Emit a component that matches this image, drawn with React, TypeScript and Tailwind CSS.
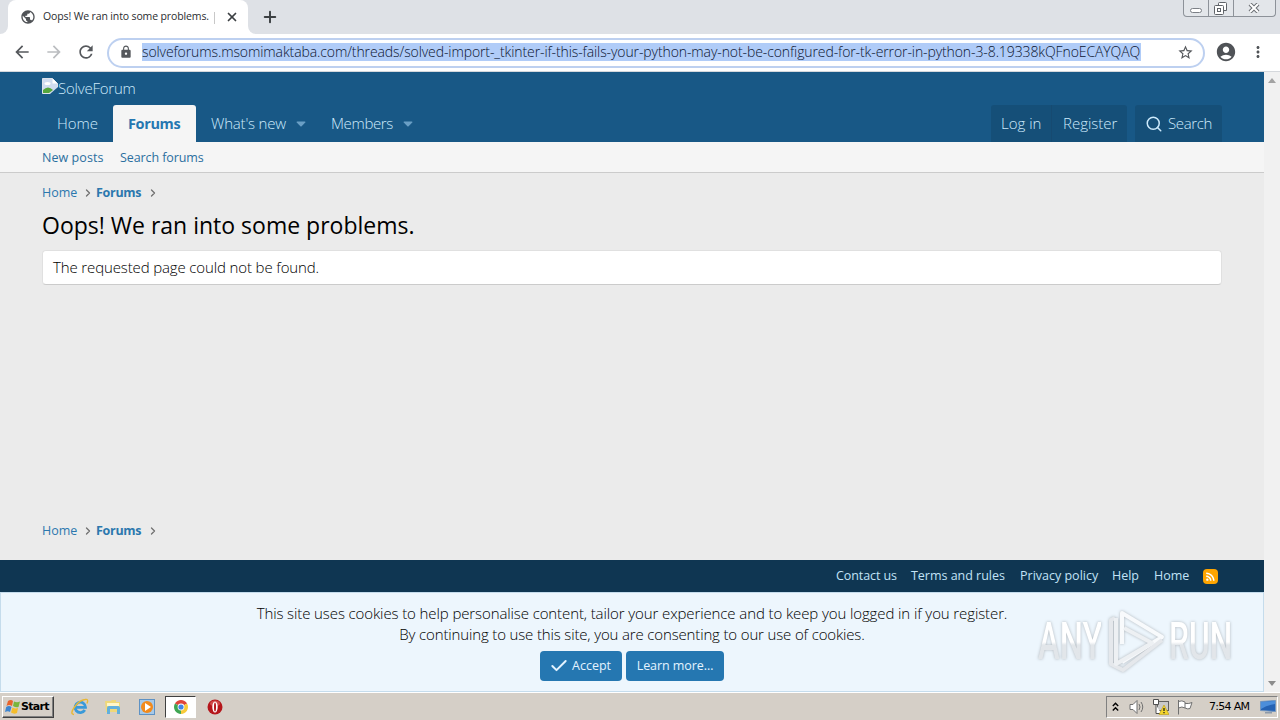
import React from 'react';
import { Check, ChevronRight, Plus, Search, X } from 'lucide-react';
import { MdAccountCircle, MdArrowBack, MdArrowForward, MdLock, MdMoreVert, MdPublic, MdRefresh, MdRssFeed, MdStarBorder } from 'react-icons/md';

interface NavItem {
  label: string;
  className: string;
}

const footerLinks: NavItem[] = [
  { label: 'Contact us', className: 'w-[75px] tracking-[-0.08px]' },
  { label: 'Terms and rules', className: 'w-[109px] tracking-[-0.02px]' },
  { label: 'Privacy policy', className: 'w-[92px]' },
  { label: 'Help', className: 'w-[42px] tracking-[-0.05px]' },
  { label: 'Home', className: 'w-[49px] tracking-[-0.05px]' },
];

const Caret: React.FC = () => (
  <svg className="h-[6px] w-[10px]" viewBox="0 0 10 6">
    <path d="M0.5 1.2Q0.5 0.5 1.2 0.5H8.8Q9.5 0.5 9.5 1.2L5.6 5.2Q5 5.8 4.4 5.2Z" fill="#6a9fc5" />
  </svg>
);

const TabStrip: React.FC = () => (
  <div className="flex h-[34px] items-start bg-[#dee1e6]">
    <div className="flex h-[34px] w-2 items-end bg-white">
      <div className="h-[34px] w-2 rounded-br-lg bg-[#dee1e6]" />
    </div>
    <div className="flex h-[34px] w-[240px] items-center rounded-t-lg bg-white pl-[12px]">
      <MdPublic className="h-4 w-4 text-[#505357]" />
      <span className="ml-[7px] w-[171px] whitespace-nowrap font-['Open_Sans'] text-[10.5px] tracking-[-0.13px] text-[#2b2d30]">
        Oops! We ran into some problems.
      </span>
      <span className="mt-0.5 h-3 w-px bg-[#c8c8c8]" />
      <X className="ml-[10px] h-[14px] w-[14px] shrink-0 text-[#3c4043]" strokeWidth={3} />
    </div>
    <div className="h-[34px] w-2 bg-white">
      <div className="h-[34px] w-2 rounded-bl-lg bg-[#dee1e6]" />
    </div>
    <Plus className="ml-[5px] mt-[8px] h-[18px] w-[18px] text-[#3c4043]" strokeWidth={2.6} />
    <div className="ml-auto mr-[4px] flex h-[17px] w-[93px] rounded-b-[4px] border border-t-0 border-[#8d9299] bg-[#e3e6ea]">
      <div className="w-[25px] border-r border-[#8d9299] pl-[6px] pt-[8px]">
        <div className="h-[5px] w-3 rounded-sm border border-[#7c8086] bg-white" />
      </div>
      <div className="w-[25px] border-r border-[#8d9299] pl-[5px] pt-[2px]">
        <svg className="h-[13px] w-[13px]" viewBox="0 0 13 13" fill="none" stroke="#5f6368">
          <path d="M4.500 3V1.500Q4.500 0.500 5.500 0.500H11.500Q12.500 0.500 12.500 1.500V8.500H9.500" fill="#fff" />
          <rect x="0.500" y="3.500" width="9" height="9" rx="1" fill="#fff" />
          <rect x="3.500" y="6.500" width="3" height="3" />
        </svg>
      </div>
      <div className="flex-1 pl-[14px] pt-[3px]">
        <svg className="h-[10px] w-3" viewBox="0 0 12 10" fill="none">
          <path d="M2 1L10 9M10 1L2 9" stroke="#6a6e73" strokeWidth="4" />
          <path d="M2 1L10 9M10 1L2 9" stroke="#fff" strokeWidth="2" />
        </svg>
      </div>
    </div>
  </div>
);

const Toolbar: React.FC = () => (
  <div className="flex h-[38px] items-center border-b border-[#d5d8dc] bg-white pb-px">
    <MdArrowBack className="ml-[12px] h-5 w-5 text-[#55585c]" />
    <MdArrowForward className="ml-[12px] h-5 w-5 text-[#bbbdc0]" />
    <MdRefresh className="ml-[12px] h-5 w-5 text-[#55585c]" />
    <div className="mt-px ml-[11px] flex h-[30px] w-[1098px] items-center rounded-full border-2 border-[#bdd0f0] bg-white pb-px">
      <MdLock className="ml-[10px] h-[14px] w-[14px] text-[#55585c]" />
      <span className="ml-[9px] flex h-[18px] w-[999px] items-center whitespace-nowrap bg-[#b0ccf8] pb-px font-['Open_Sans'] text-[14px] font-light tracking-[-0.1px] text-[#0c1530]">
        solveforums.msomimaktaba.com/threads/solved-import-_tkinter-if-this-fails-your-python-may-not-be-configured-for-tk-error-in-python-3-8.19338kQFnoECAYQAQ
      </span>
      <MdStarBorder className="ml-[36px] h-[17px] w-[17px] text-[#55585c]" />
    </div>
    <MdAccountCircle className="ml-[10px] h-[22px] w-[22px] text-[#505357]" />
    <MdMoreVert className="ml-[12px] h-[18px] w-[18px] text-[#505357]" />
  </div>
);

const SiteHeader: React.FC = () => (
  <header className="font-['Open_Sans']">
    <div className="flex h-[70px] flex-col bg-[#185886] px-[42px] text-[#cdeafc]">
      <div className="flex h-[33px] pt-[6px]">
        <svg className="h-4 w-4" viewBox="0 0 16 16">
          <path d="M0.500 0.500H10.500L15.500 5.500V11L9 15.500H0.500Z" fill="#d0dcf0" stroke="#dfe3ea" />
          <path d="M10.500 0.500V5.500H15.500Z" fill="#fff" />
          <ellipse cx="5.500" cy="5.500" rx="3" ry="1.500" fill="#fff" />
          <path d="M1 15V12Q6 7 11 12L7 15Z" fill="#55a63c" />
          <path d="M16 9V16H8Z" fill="#185886" />
        </svg>
        <span className="h-[21px] text-[15px] leading-[21px] font-light tracking-[-0.22px]">SolveForum</span>
      </div>
      <nav className="flex h-[37px] text-[15px] leading-[37px] font-light whitespace-nowrap">
        <a className="w-[71px] pl-[15px]">Home</a>
        <a className="w-[83px] rounded-t-[3px] bg-[#f5f5f5] pl-[15px] text-[14.5px] font-bold tracking-[-0.38px] text-[#2577b1]">Forums</a>
        <a className="w-[100px] pl-[15px] tracking-[-0.2px]">What's new</a>
        <span className="flex w-[20px] items-center"><Caret /></span>
        <a className="w-[87px] pl-[15px] tracking-[-0.35px]">Members</a>
        <span className="flex w-[20px] items-center"><Caret /></span>
        <div className="ml-auto flex">
          <a className="w-[61px] rounded-tl-[3px] border-r border-[#164a71] bg-[#154f78] pl-[10px]">Log in</a>
          <a className="w-[75px] rounded-tr-[3px] bg-[#154f78] pl-[11px]">Register</a>
          <a className="ml-2 flex w-[87px] items-center rounded-t-[3px] bg-[#154f78] pl-[10px] tracking-[-0.35px]">
            <Search className="mr-[5px] h-[18px] w-[18px]" strokeWidth={2} />
            Search
          </a>
        </div>
      </nav>
    </div>
    <div className="flex h-[31px] border-b border-[#cbcbcb] bg-[#f5f5f5] pl-[42px] text-[12.5px] leading-[31px] text-[#2b6f9f]">
      <a className="w-[78px] tracking-[0.06px]">New posts</a>
      <a className="tracking-[-0.1px]">Search forums</a>
    </div>
  </header>
);

const Breadcrumbs: React.FC = () => (
  <div className="flex h-[18px] items-center font-['Open_Sans'] text-[12.5px] leading-[18px] text-[#2b78ae]">
    <a className="w-[40px] tracking-[-0.05px]">Home</a>
    <ChevronRight className="h-3 w-3 text-[#707070]" strokeWidth={2.6} />
    <a className="ml-[2px] w-[51px] font-bold tracking-[-0.3px]">Forums</a>
    <ChevronRight className="h-3 w-3 text-[#707070]" strokeWidth={2.6} />
  </div>
);

const Watermark: React.FC = () => (
  <div className="absolute top-[14px] right-[29px] flex h-[68px] w-[196px] items-center text-white [filter:drop-shadow(0_0_1.5px_#b0b6bc)]">
    <span className="w-[69px] pt-[2px]">
      <span className="block w-[100px] origin-left scale-x-[0.63] bg-linear-to-b from-white from-50% to-[#e2e6ea] to-55% bg-clip-text font-['Roboto'] text-[52px] leading-[60px] font-medium text-transparent">ANY</span>
    </span>
    <svg className="h-[64px] w-[58px] shrink-0" viewBox="0 0 58 64" fill="none" stroke="#fff" strokeWidth="4" strokeLinejoin="round">
      <path d="M15 35V4L55 28L15 53" stroke="#f8fafc" />
      <path d="M8 9L4 11V55L16 61L55 31" stroke="#e5e8ec" />
      <path d="M17 19L45 34L9 55V9" stroke="#edf0f3" />
    </svg>
    <span className="ml-[4px] w-[65px] pt-[2px]">
      <span className="block w-[106px] origin-left scale-x-[0.61] bg-linear-to-b from-white from-50% to-[#e2e6ea] to-55% bg-clip-text font-['Roboto'] text-[52px] leading-[60px] font-medium text-transparent">RUN</span>
    </span>
  </div>
);

const CookieNotice: React.FC = () => (
  <div className="relative flex h-[100px] flex-col items-center border border-[#c5dcec] bg-[#edf6fd] pt-[10px] font-['Open_Sans'] text-[15px] leading-[21px] text-black">
    <p className="font-light tracking-[-0.105px] whitespace-nowrap">This site uses cookies to help personalise content, tailor your experience and to keep you logged in if you register.</p>
    <p className="font-light tracking-[-0.15px] whitespace-nowrap">By continuing to use this site, you are consenting to our use of cookies.</p>
    <div className="mt-[6px] flex gap-1 text-[12.5px] leading-[30px] text-[#e3f3ff]">
      <button className="flex h-[30px] w-[82px] items-center rounded bg-[#2577b1] pl-[9px]">
        <Check className="mr-[3px] h-5 w-5" strokeWidth={2.4} />
        Accept
      </button>
      <button className="h-[30px] w-[98px] rounded bg-[#2577b1] tracking-[-0.08px]">Learn more…</button>
    </div>
    <Watermark />
  </div>
);

const Scrollbar: React.FC = () => (
  <div className="flex w-4 flex-col items-center justify-between bg-[#f1f1f1] py-[6px]">
    <svg className="h-[5px] w-2" viewBox="0 0 8 5"><path d="M0 5L4 0L8 5Z" fill="#a3a3a3" /></svg>
    <svg className="h-[5px] w-2" viewBox="0 0 8 5"><path d="M0 0L4 5L8 0Z" fill="#8c8c8c" /></svg>
  </div>
);

const Taskbar: React.FC = () => (
  <div className="flex h-[28px] items-center border-t border-white bg-[#d5cfc7] font-['DejaVu_Sans'] text-[11px] text-black">
    <div className="ml-[2px] flex h-[22px] w-[52px] items-center border border-t-white border-r-[#404040] border-b-[#404040] border-l-white pl-[2px] shadow-[inset_-1px_-1px_#808080]">
      <svg className="h-4 w-4 shrink-0" viewBox="0 0 16 16">
        <path d="M3 2Q6 0 8 2L7 7Q4 5 1.500 7Z" fill="#e8642c" />
        <path d="M9 2.500Q12 4 15 2.500L13.500 8Q11 9 8 7Z" fill="#79b53c" />
        <path d="M1.200 8Q4 6 6.500 8L5 13Q3 11.500 0 13Z" fill="#3d85d0" />
        <path d="M7.500 8.500Q10 10 13 9L12 14Q9 15.500 6 13.500Z" fill="#f5bd2b" />
      </svg>
      <span className="pt-[2px] font-bold tracking-[-0.7px]">Start</span>
    </div>
    <svg className="ml-[17px] h-[18px] w-[18px]" viewBox="0 0 18 18" fill="none">
      <path d="M13.800 12A5.200 5.200 0 1 1 14.500 9.300H5" stroke="#3a9ad9" strokeWidth="2.800" />
      <path d="M3 16.500Q-1.500 16 3.500 9T14 1.500Q18 0.500 16 5.500" stroke="#e8b835" strokeWidth="1.400" />
    </svg>
    <svg className="ml-[16px] h-4 w-4" viewBox="0 0 16 16">
      <path d="M0 2H6L7 1H11V3H15V13H1Z" fill="#efd879" />
      <path d="M2 4H14V7H2Z" fill="#fff6c9" />
      <path d="M2 15V9Q2 7 4 7H13Q15 7 15 9V15H12V10H5V15Z" fill="#62b0dc" />
    </svg>
    <svg className="ml-[18px] h-4 w-4" viewBox="0 0 16 16">
      <rect x="0.500" y="0.500" width="15" height="15" fill="#a7c9e8" stroke="#5e92c4" />
      <circle cx="8" cy="8" r="6" fill="#f28a1c" />
      <path d="M6 4L12 8L6 12Z" fill="#fff" />
    </svg>
    <div className="ml-[10px] flex h-[22px] w-[31px] items-center justify-center border border-t-[#404040] border-r-white border-b-white border-l-[#404040] bg-white">
      <svg className="h-[14px] w-[14px]" viewBox="0 0 14 14">
        <path d="M7 7L0.940 3.500A7 7 0 0 1 13.060 3.500Z" fill="#e0443a" />
        <path d="M7 7L13.060 3.500A7 7 0 0 1 7 14Z" fill="#f8ca3a" />
        <path d="M7 7L7 14A7 7 0 0 1 0.940 3.500Z" fill="#3fa653" />
        <circle cx="7" cy="7" r="3.400" fill="#fff" />
        <circle cx="7" cy="7" r="2.600" fill="#4284e8" />
      </svg>
    </div>
    <svg className="ml-[11px] h-4 w-4" viewBox="0 0 16 16">
      <circle cx="8" cy="8" r="7.500" fill="#b5161b" />
      <ellipse cx="8" cy="4.500" rx="5" ry="3" fill="#d04a4a" />
      <ellipse cx="8" cy="8" rx="2.700" ry="5.500" fill="#fff" />
      <ellipse cx="8" cy="8" rx="1" ry="4.500" fill="#b5161b" />
    </svg>
    <div className="mr-[2px] ml-auto flex h-[22px] w-[172px] items-center border border-t-[#808080] border-r-white border-b-white border-l-[#808080]">
      <svg className="ml-[5px] h-[10px] w-[7px]" viewBox="0 0 7 10" fill="none" stroke="#000" strokeWidth="1.400">
        <path d="M0.800 4L3.500 1.300L6.200 4M0.800 8.500L3.500 5.800L6.200 8.500" />
      </svg>
      <svg className="ml-[10px] h-4 w-4" viewBox="0 0 16 16" fill="none" stroke="#707070">
        <path d="M1 5.500H4L8 1.500V14.500L4 10.500H1Z" fill="#fff" />
        <path d="M10 5Q12 8 10 11M12 3Q15.500 8 12 13" />
      </svg>
      <svg className="ml-[8px] h-4 w-4" viewBox="0 0 16 16">
        <rect x="4.500" y="2.500" width="11" height="9" fill="#c9c9c9" stroke="#606060" />
        <path d="M0.500 0.500H5.500V5.500H0.500ZM3 5.500V14.500H8" fill="#fff" stroke="#505050" />
        <path d="M11 6L16 15.500H6Z" fill="#f4d52b" stroke="#b89b10" strokeWidth="0.600" />
        <path d="M11 9V12M11 13V14.300" stroke="#222" strokeWidth="1.300" />
      </svg>
      <svg className="ml-[8px] h-4 w-4" viewBox="0 0 16 16" fill="#fff" stroke="#707070">
        <path d="M1.500 1V15.500M1.500 2.500Q5 1 8 3V9Q5 7 1.500 9M8 4.500Q12 5 15 3.500L13 9.500Q11 10.500 8 9" />
      </svg>
      <span className="ml-[16px] w-[51px] pt-[2px] text-[11px] tracking-[-0.7px] whitespace-nowrap">7:54 AM</span>
      <svg className="h-[14px] w-4" viewBox="0 0 16 14">
        <path d="M0.500 1.500L15.500 0.500V11.500L0.500 10.500Z" fill="#2562b4" stroke="#7497c0" />
        <path d="M1 2L15 1V4Q7 5 1 9Z" fill="#4c8edb" />
        <path d="M5 12H12V13.500H5Z" fill="#8d9aaa" />
      </svg>
    </div>
  </div>
);

const App: React.FC = () => {
  return (
    <div className="flex h-[720px] w-[1280px] flex-col overflow-hidden bg-white">
      <TabStrip />
      <Toolbar />
      <div className="flex h-[620px]">
        <div className="flex w-[1264px] flex-col bg-[#ebebeb]">
          <SiteHeader />
          <main className="flex h-[387px] flex-col px-[42px] pt-[11px] pb-[20px] font-['Open_Sans'] text-black">
            <Breadcrumbs />
            <h1 className="mt-[6px] h-[34px] text-[23px] leading-[34px] whitespace-nowrap">Oops! We ran into some problems.</h1>
            <div className="mt-[8px] h-[35px] rounded border border-[#e0e0e0] border-b-[#cbcbcb] bg-white pl-[10px] text-[15px] leading-[33px] font-light tracking-[-0.13px]">
              The requested page could not be found.
            </div>
            <div className="mt-auto">
              <Breadcrumbs />
            </div>
          </main>
          <footer className="flex h-[32px] items-center justify-end bg-[#0f3652] pr-[46px] font-['Open_Sans'] text-[12.5px] whitespace-nowrap text-[#c2e3f7]">
            {footerLinks.map((link) => (
              <a key={link.label} className={link.className}>{link.label}</a>
            ))}
            <span className="flex h-[15px] w-[15px] items-center justify-center rounded-sm bg-[#ffa500] text-white">
              <MdRssFeed className="h-[13px] w-[13px]" />
            </span>
          </footer>
          <CookieNotice />
        </div>
        <Scrollbar />
      </div>
      <Taskbar />
    </div>
  );
};

export default App;
